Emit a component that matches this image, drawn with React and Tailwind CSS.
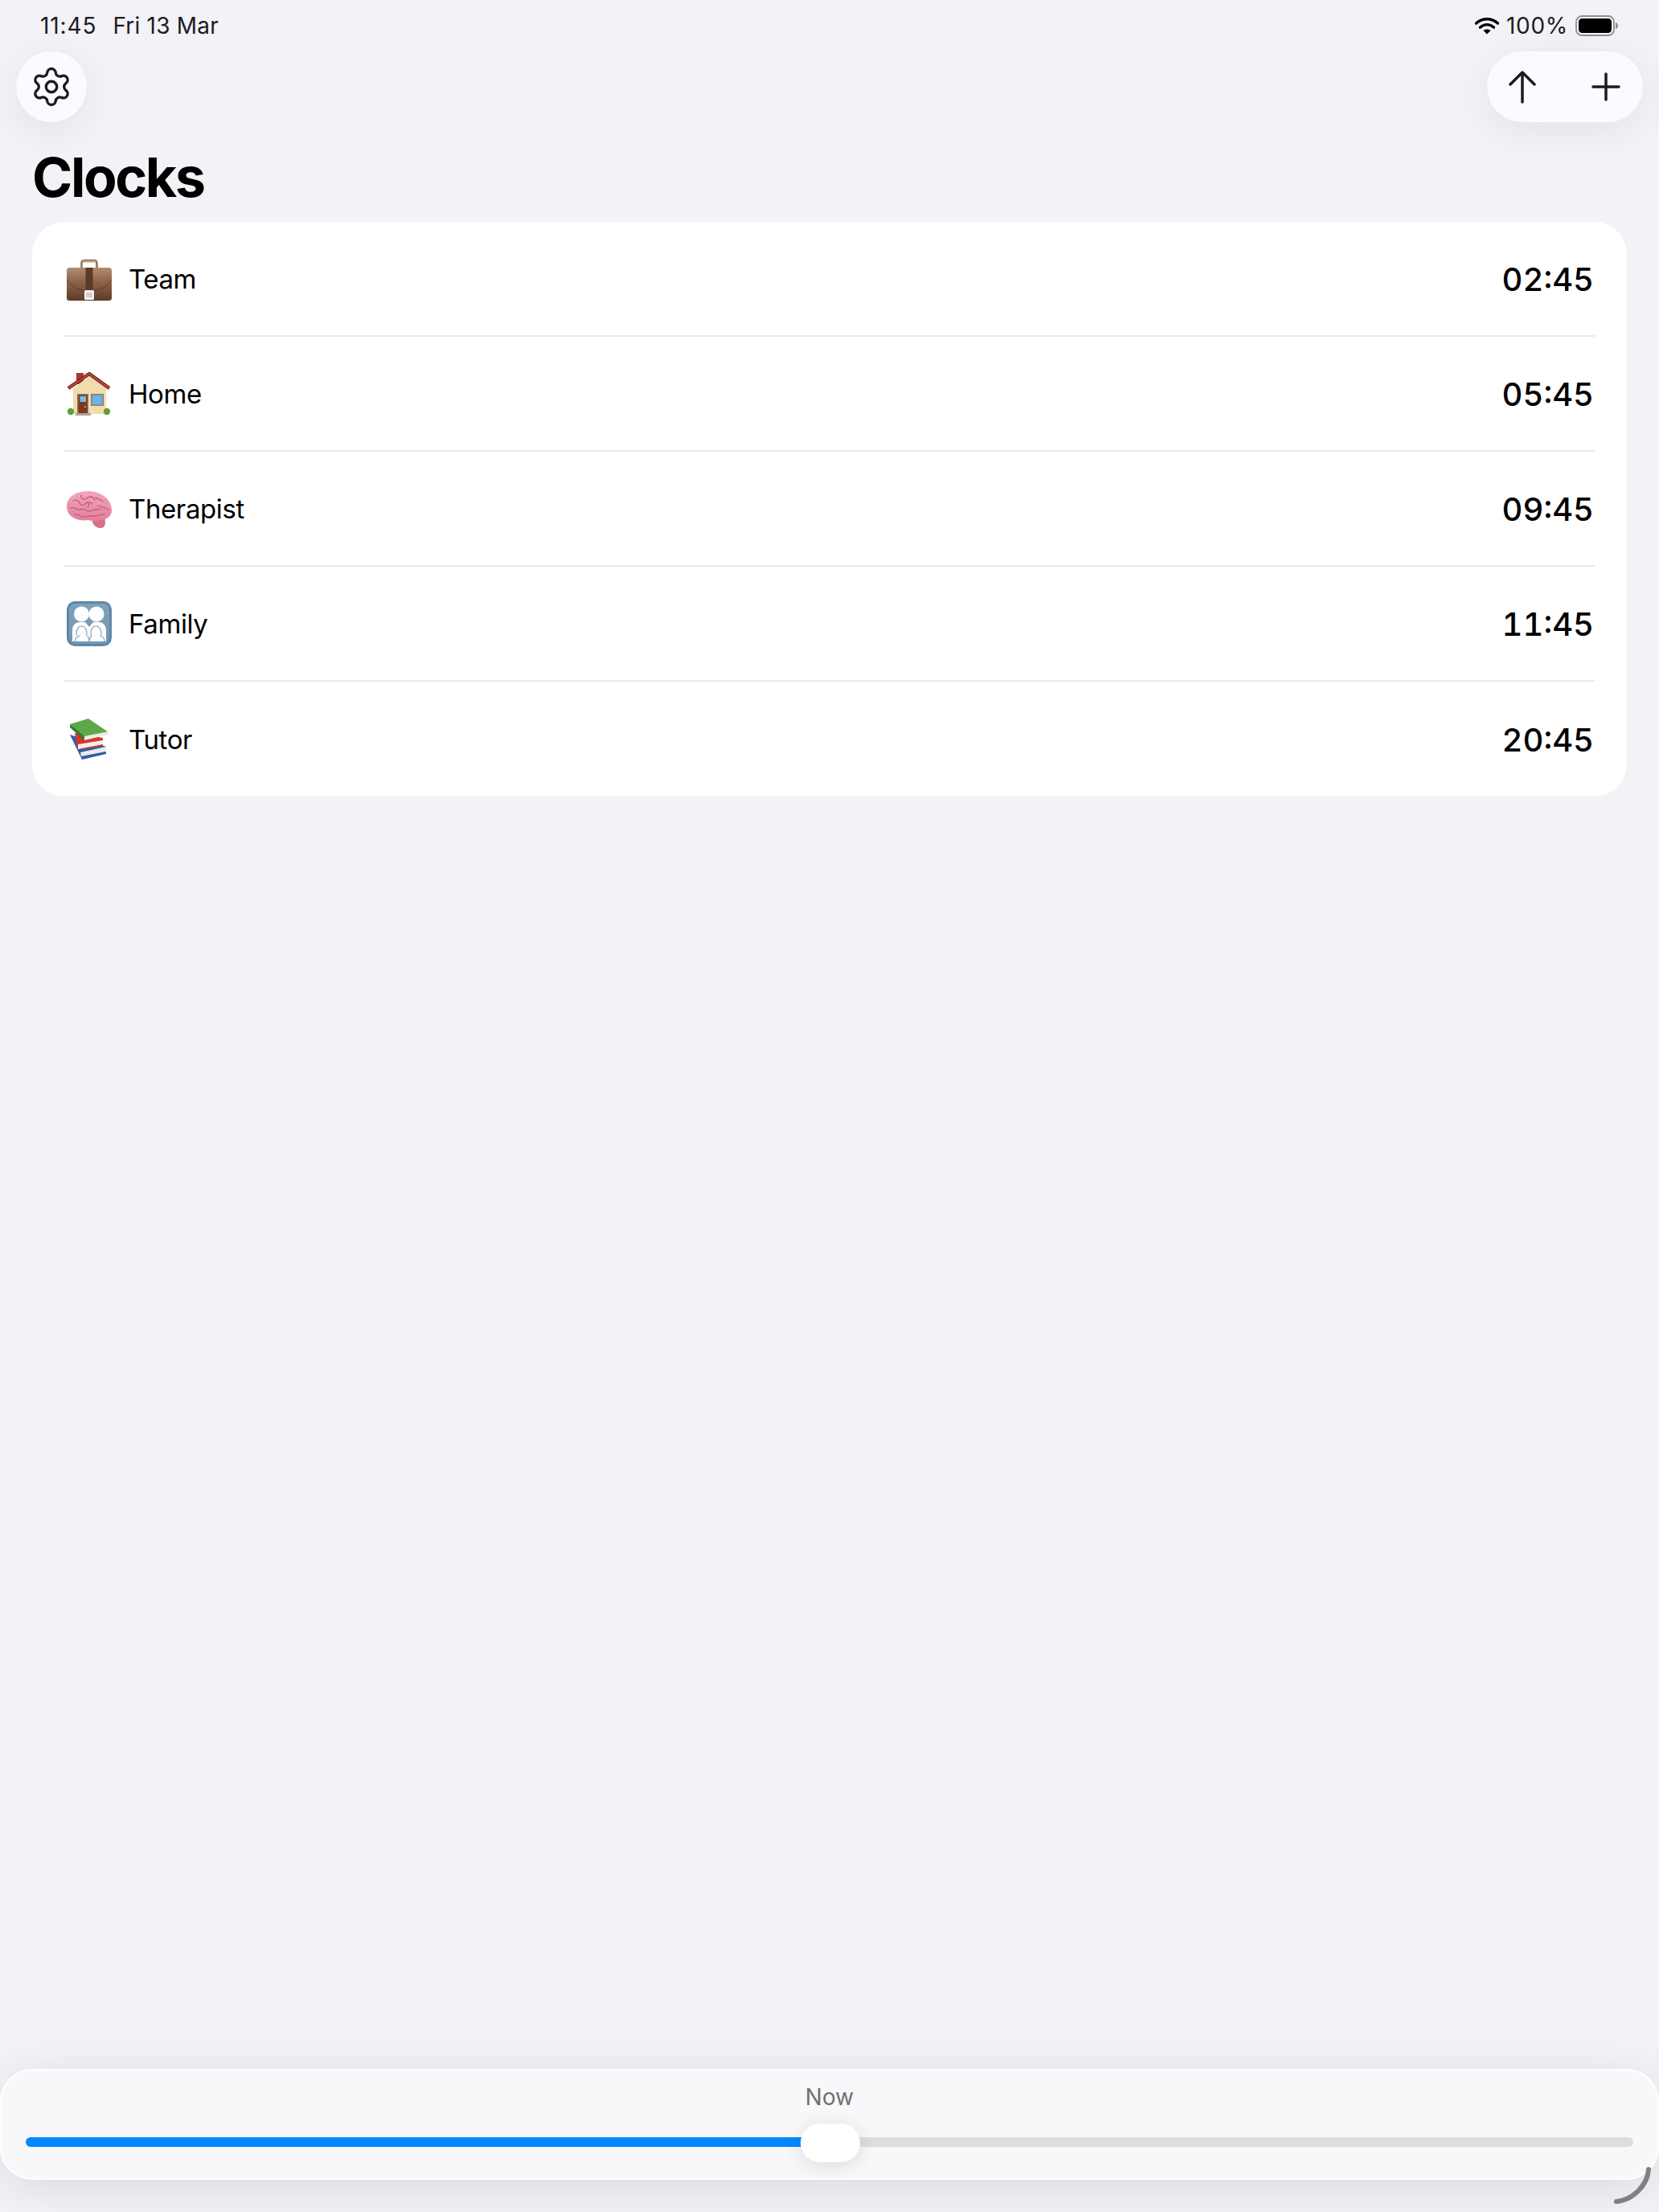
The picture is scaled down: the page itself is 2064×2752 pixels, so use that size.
import { Settings } from "lucide-react";

function Briefcase() {
  return (
    <svg width="56" height="56" viewBox="0 0 56 56">
      <defs>
        <linearGradient id="bag" x1="0" y1="0" x2="0" y2="1">
          <stop offset="0" stopColor="#b08d72" />
          <stop offset="0.45" stopColor="#8c6248" />
          <stop offset="1" stopColor="#5c3b2a" />
        </linearGradient>
      </defs>
      <path d="M18.500 14V8.500C18.500 6 20 5 22 5h12c2 0 3.500 1 3.500 3.500V14" fill="none" stroke="#8f7660" strokeWidth="2.600" />
      <path d="M20 6.500h16" stroke="#bfa88f" strokeWidth="2" />
      <rect x="0" y="14" width="56" height="41" rx="3.500" fill="url(#bag)" />
      <path d="M1 30c5 8 15 13 27 13s22-5 27-13" fill="none" stroke="#5c3b28" strokeWidth="0.900" />
      <rect x="23.500" y="14" width="9" height="29" fill="#5a3a28" />
      <rect x="22" y="42" width="12" height="12" rx="1.500" fill="#f4f4f4" />
      <rect x="24" y="45" width="8" height="6" rx="1" fill="#cfcfcf" />
    </svg>
  );
}

function House() {
  return (
    <svg width="56" height="56" viewBox="0 0 56 56">
      <rect x="12" y="2" width="9" height="14" fill="#a8382e" />
      <path d="M28 6 8 21v32h41V21z" fill="#f2dcae" />
      <path d="M2 21 28 3l25 18" fill="none" stroke="#3d2a25" strokeWidth="4.400" strokeLinejoin="round" />
      <path d="M2 21 28 3l25 18" fill="none" stroke="#d8392e" strokeWidth="2.400" strokeLinejoin="round" />
      <rect x="13" y="28" width="14" height="25" fill="#8d7a62" />
      <rect x="14.500" y="29.500" width="11" height="23.500" fill="#7a3a20" />
      <rect x="16.500" y="31" width="7.500" height="7" fill="#78bce8" />
      <circle cx="23" cy="44" r="0.900" fill="#f3c94a" />
      <rect x="30" y="28" width="16" height="15" fill="#8e7a62" />
      <rect x="31.500" y="29.500" width="13" height="12" fill="#6db2e4" />
      <rect x="11" y="52" width="19" height="3" fill="#a9a39b" />
      <circle cx="5" cy="50" r="4.200" fill="#5f9f33" />
      <circle cx="50" cy="50" r="4.200" fill="#5f9f33" />
    </svg>
  );
}

function Brain() {
  return (
    <svg width="56" height="56" viewBox="0 0 56 56">
      <defs>
        <linearGradient id="lobe" x1="0" y1="0" x2="0" y2="1">
          <stop offset="0" stopColor="#f4a6ba" />
          <stop offset="1" stopColor="#e27f9b" />
        </linearGradient>
      </defs>
      <path d="M31 38c0 8 4 14 11 14 6 0 7-6 5-13z" fill="#d9708a" />
      <path d="M0 27C-1 18 5 11 14 8c9-3 21-3 29 2 8 4 13 12 13 20 0 5-3 9-9 11-6 2-14 3-20 1-7 1-14 0-19-3-5-3-7-7-8-12z" fill="url(#lobe)" />
      <g fill="none" stroke="#c25a7c" strokeWidth="1.300" strokeLinecap="round">
        <path d="M8 18c4-2 7 0 8 3s5 3 7 1 6-3 9 0" />
        <path d="M18 11c-1 3 1 5 4 5s4-3 7-3 5 2 6 4" />
        <path d="M36 14c3 3 7 2 9 5" />
        <path d="M4 27c4-2 7 1 10 2s6-2 9 0 5 3 9 1 7 0 10-2" />
        <path d="M39 24c3 2 7 1 13 5" />
        <path d="M9 35c3-1 6 0 8 2s6 1 9 0 7 1 10 0 7-1 11-3" />
        <path d="M26 19c2 2 2 5 0 7" />
      </g>
    </svg>
  );
}

function FamilySign() {
  return (
    <svg width="56" height="56" viewBox="0 0 56 56">
      <defs>
        <linearGradient id="sign" x1="0" y1="0" x2="0" y2="1">
          <stop offset="0" stopColor="#7fa3bd" />
          <stop offset="1" stopColor="#7396b0" />
        </linearGradient>
      </defs>
      <rect x="1.500" y="1.500" width="53" height="53" rx="9" fill="url(#sign)" stroke="#5f87a5" strokeWidth="3" />
      <g fill="#fff">
        <circle cx="18.500" cy="16" r="9.500" />
        <circle cx="37" cy="16" r="9.500" />
        <path d="M7 50V36c0-6 4-10 9-10h7l5 6 5-6h7c5 0 9 4 9 10v14z" />
      </g>
      <g fill="none" stroke="#7d9fb9" strokeWidth="1.200">
        <path d="M13 43c-2-2-1-12 5.500-12S26 41 24 43" />
        <path d="M31 43c-2-2-1-12 5.500-12S44 41 42 43" />
        <path d="M10 50c0-4 3-6 7-7M26 43c1 2 2 4 2 7 0-3 1-5 3-7M42 43c3 1 5 3 5 7" />
      </g>
    </svg>
  );
}

function Books() {
  return (
    <svg width="56" height="56" viewBox="0 0 56 56">
      <path d="M4 22 49 37v9L19 53z" fill="#2f5cae" />
      <path d="M17 44l32-7v6l-31 6z" fill="#ecebe4" />
      <path d="M10 20 45 26v10L14 41z" fill="#d9342a" />
      <path d="M14 34l31-5v5l-31 6z" fill="#f0efe9" />
      <path d="M4 9 27 2l25 17-30 7z" fill="#5fa84a" />
      <path d="M22 24l30-6v4l-30 7z" fill="#ecebe4" />
      <path d="M4 9l18 15v5L4 13z" fill="#2f7d32" />
    </svg>
  );
}

const clocks = [
  { name: "Team", time: "02:45", icon: <Briefcase /> },
  { name: "Home", time: "05:45", icon: <House /> },
  { name: "Therapist", time: "09:45", icon: <Brain /> },
  { name: "Family", time: "11:45", icon: <FamilySign /> },
  { name: "Tutor", time: "20:45", icon: <Books /> },
];

function StatusBar() {
  return (
    <div className="flex h-[64px] items-center justify-between pl-[50px] pr-[50px] text-[28px] text-[#1c1c1e]">
      <div className="flex gap-[20px]">
        <span className="tracking-[0.9px]">11:45</span>
        <span className="tracking-[0.2px]">Fri 13 Mar</span>
      </div>
      <div className="flex items-center gap-[9px]">
        <svg width="30" height="22" viewBox="0 0 30 22">
          <path d="M1.500 8C9 1 21 1 28.500 8" fill="none" stroke="#000" strokeWidth="3.400" strokeLinecap="round" />
          <path d="M6.500 13C11.500 8.500 18.500 8.500 23.500 13" fill="none" stroke="#000" strokeWidth="3.400" strokeLinecap="round" />
          <path d="M15 21.500 10.500 17c2.500-2 6.500-2 9 0z" fill="#000" />
        </svg>
        <span className="tracking-[0.7px]">100%</span>
        <svg width="54" height="26" viewBox="0 0 54 26">
          <rect x="1" y="1" width="47" height="24" rx="7" fill="none" stroke="#8e8e93" strokeWidth="1.800" />
          <rect x="4" y="4" width="41" height="18" rx="4.500" fill="#000" />
          <path d="M50 9c2 .5 3 2 3 4s-1 3.500-3 4z" fill="#8e8e93" />
        </svg>
      </div>
    </div>
  );
}

function Toolbar() {
  return (
    <div className="flex items-start justify-between pl-[20px] pr-[20px]">
      <button className="flex h-[88px] w-[88px] items-center justify-center rounded-full bg-[#fbfbff] text-[#1c1c1e] shadow-[0_10px_50px_rgba(0,0,0,0.07)]">
        <Settings size={54} strokeWidth={1.500} />
      </button>
      <div className="flex h-[88px] w-[194px] items-center justify-between rounded-full bg-[#fbfbff] pl-[27px] pr-[28px] shadow-[0_10px_50px_rgba(0,0,0,0.07)]">
        <svg width="34" height="42" viewBox="0 0 34 42">
          <path d="M2 18 17 3l15 15M17 3v37" fill="none" stroke="#1c1c1e" strokeWidth="3.500" strokeLinecap="round" strokeLinejoin="round" />
        </svg>
        <svg width="36" height="36" viewBox="0 0 36 36">
          <path d="M18 2v32M2 18h32" fill="none" stroke="#1c1c1e" strokeWidth="3.500" strokeLinecap="round" />
        </svg>
      </div>
    </div>
  );
}

function ClockRow({ clock, last }) {
  return (
    <div className={"flex h-[143px] items-center justify-between " + (last ? "" : "border-b-2 border-[#e9e9eb]")}>
      <div className="flex items-center gap-[21px] pl-[3px]">
        {clock.icon}
        <span className="pt-[2px] text-[33px] tracking-[-0.4px] text-black">{clock.name}</span>
      </div>
      <span className="pr-[1px] pt-[3px] text-[40px] font-medium tabular-nums text-black">{clock.time}</span>
    </div>
  );
}

function TimeSlider() {
  return (
    <div className="relative mb-[40px] mt-auto h-[138px] rounded-[40px] border-2 border-white bg-[#f8f8fa] shadow-[0_10px_60px_rgba(0,0,0,0.10)]">
      <div className="flex justify-center pt-[16px] text-[28px] leading-[34px] text-[#707072]">Now</div>
      <div className="relative ml-[30px] mr-[30px] mt-[33px] flex h-[12px]">
        <div className="w-[970px] rounded-l-full bg-[#0588ff]" />
        <div className="flex-1 rounded-r-full bg-[#dedee0]" />
        <div className="absolute left-[964px] top-[-17px] h-[48px] w-[74px] rounded-[24px] bg-white shadow-[0_4px_24px_rgba(0,0,0,0.12)]" />
      </div>
    </div>
  );
}

export default function App() {
  return (
    <div className="relative flex min-h-[2752px] flex-col bg-[#f2f2f7] font-['Inter',sans-serif]">
      <StatusBar />
      <Toolbar />
      <h1 className="pl-[40px] pt-[28px] text-[68px] font-bold leading-[80px] tracking-[-2.4px] text-black">Clocks</h1>
      <div className="ml-[40px] mr-[40px] mt-[16px] rounded-[40px] bg-white pl-[40px] pr-[40px]">
        {clocks.map((clock, i) => (
          <ClockRow key={clock.name} clock={clock} last={i === clocks.length - 1} />
        ))}
      </div>
      <TimeSlider />
      {/* window resize corner */}
      <svg className="absolute bottom-0 right-0" width="64" height="64" viewBox="0 0 64 64">
        <path d="M51 11C50 30 32 49 11 51" fill="none" stroke="#808082" strokeWidth="6" strokeLinecap="round" />
      </svg>
    </div>
  );
}
